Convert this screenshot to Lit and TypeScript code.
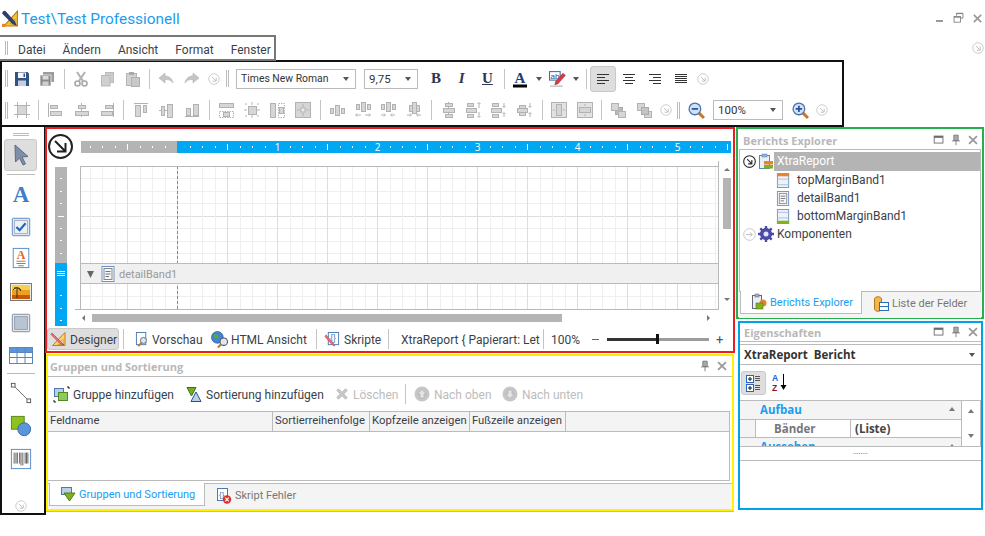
import { LitElement, html, svg, css } from 'lit';
import { customElement } from 'lit/decorators.js';

const G = '#d6d6d6', S = '#b2b2b2';
const r = (x: number, y: number, w: number, h: number, dash = false) =>
  svg`<rect x=${x + .5} y=${y + .5} width=${w} height=${h} fill=${dash ? 'none' : G} stroke=${S} stroke-dasharray=${dash ? '1.5 1' : 'none'}/>`;
const l = (x1: number, y1: number, x2: number, y2: number) =>
  svg`<line x1=${x1} y1=${y1} x2=${x2} y2=${y2} stroke=${S}/>`;
const ar = (d: string) => svg`<path d=${d} fill="none" stroke=${S}/>`;

const I: Record<string, any> = {
  save: svg`<path d="M1 1h12.5L15 2.5V15H1z" fill="#34527f"/><rect x="4" y="1.5" width="8" height="5.5" fill="#f4f6f9"/><rect x="4" y="9.5" width="8" height="5.5" fill="#c3cfe0"/><rect x="9.5" y="2.5" width="1.5" height="3.5" fill="#34527f"/>`,
  saveall: svg`<path d="M4 1h11v10H4z" fill="#9d9d9d"/><path d="M1 4h11v11H1z" fill="#8c8c8c" stroke="#fff" stroke-width=".7"/><rect x="3.5" y="5" width="6" height="3.5" fill="#dcdcdc"/><rect x="3.5" y="10.5" width="6" height="4" fill="#cfcfcf"/>`,
  cut: svg`<path d="M4 1l6 9M12 1L6 10" stroke="#b4b4b4" stroke-width="2.2" fill="none"/><circle cx="4.5" cy="12.5" r="2.5" fill="#fff" stroke="#a8a8a8" stroke-width="1.6"/><circle cx="11.5" cy="12.5" r="2.5" fill="#fff" stroke="#a8a8a8" stroke-width="1.6"/>`,
  copy: svg`<rect x="6.5" y="1.5" width="8" height="10" fill="#ccc" stroke="#bbb"/><rect x="2.5" y="4.5" width="8.5" height="10.5" fill="#cfcfcf" stroke="#bbb"/>`,
  paste: svg`<rect x="1.5" y="2.5" width="10" height="12" fill="#d2d2d2" stroke="#b5b5b5"/><rect x="4" y="1" width="5" height="3" fill="#aaa"/><rect x="6.5" y="6.5" width="8" height="9" fill="#c9c9c9" stroke="#b0b0b0"/>`,
  undo: svg`<path d="M1 7l6-5v3c4 0 7 2 8 7-2-3-4-3.500-8-3.500V12z" fill="#c4c4c4" stroke="#b5b5b5" stroke-width=".6"/>`,
  redo: svg`<path d="M15 7L9 2v3C5 5 2 7 1 12c2-3 4-3.500 8-3.500V12z" fill="#c4c4c4" stroke="#b5b5b5" stroke-width=".6"/>`,
  circ: svg`<circle cx="8" cy="8" r="6" fill="#fff" stroke="#c6c6c6"/><path d="M5.500 5.500L10 10M10.500 6.500v4h-4" stroke="#b8b8b8" fill="none"/>`,
  hlight: svg`<rect x=".5" y="1.500" width="10" height="8" fill="#fff" stroke="#3b6fb5"/><text x="1.500" y="8" font-size="7.500" fill="#1f4e96" style="font-family:'Liberation Sans'">ab</text><path d="M6 11l7-8 2.500 2-7 8-3 1z" fill="#d83a3a" stroke="#a02020" stroke-width=".4"/><rect x="1" y="14.500" width="12" height="1.500" fill="#c9c9c9"/>`,
  al: svg`<path d="M2 3.500h12M2 6.500h8M2 9.500h12M2 12.500h8" stroke="#333" fill="none"/>`,
  ac: svg`<path d="M2 3.500h12M4 6.500h8M2 9.500h12M4 12.500h8" stroke="#333" fill="none"/>`,
  ar: svg`<path d="M2 3.500h12M6 6.500h8M2 9.500h12M6 12.500h8" stroke="#333" fill="none"/>`,
  aj: svg`<path d="M2 3.500h12M2 5.500h12M2 7.500h12M2 9.500h12M2 11.500h12" stroke="#333" fill="none"/>`,
  grid: svg`${r(3, 3, 9, 9)}${l(0, 3.5, 16, 3.5)}${l(0, 12.5, 16, 12.5)}${l(3.5, 0, 3.5, 16)}${l(12.5, 0, 12.5, 16)}`,
  s1: svg`${l(1.5, 1, 1.5, 15)}${r(3, 3, 7, 3)}${r(3, 9, 11, 4)}`,
  s2: svg`${l(8.5, 1, 8.5, 15)}${r(5, 3, 7, 3)}${r(2, 9, 13, 4)}`,
  s3: svg`${l(14.5, 1, 14.5, 15)}${r(6, 3, 7, 3)}${r(2, 9, 11, 4)}`,
  s4: svg`${l(1, 1.5, 15, 1.5)}${r(2, 3, 5, 11)}${r(10, 3, 3, 7)}`,
  s5: svg`${l(1, 8.5, 15, 8.5)}${r(3, 4, 3, 9)}${r(9, 2, 5, 13)}`,
  s6: svg`${l(1, 14.5, 15, 14.5)}${r(2, 6, 4, 7)}${r(9, 2, 5, 11)}`,
  w1: svg`${r(1, 1, 14, 4)}${r(1, 9, 14, 6, true)}${r(5, 10, 6, 4)}`,
  w2: svg`${r(4, 4, 8, 8)}${l(8, 0, 8, 3)}${l(8, 13, 8, 16)}${l(0, 8, 3, 8)}${l(13, 8, 16, 8)}${ar('M1 2h2M13 2h2M1 14h2M13 14h2')}`,
  w3: svg`${r(1, 1, 5, 14)}${r(9, 1, 6, 14, true)}${r(10, 5, 4, 6)}`,
  w4: svg`<rect x=".5" y=".5" width="15" height="15" fill=${G} stroke=${S}/><rect x="6" y="6" width="4" height="4" fill="#eee" stroke=${S}/>${ar('M8 2v3M8 11v3M2 8h3M11 8h3')}`,
  h1: svg`${r(1, 6, 3, 5)}${r(6, 3, 4, 10)}${r(12, 6, 3, 5)}`,
  h2: svg`${r(1, 2, 3, 5)}${r(6, 0, 4, 9)}${r(12, 2, 3, 5)}${ar('M1 13h5M10 13h5M2 11.500l-1.500 1.500 1.500 1.500M14 11.500l1.500 1.500-1.500 1.500')}`,
  h3: svg`${r(1, 2, 3, 5)}${r(6, 0, 4, 9)}${r(12, 2, 3, 5)}${ar('M1 13h4M11 13h4M4 11.500l1.500 1.500-1.500 1.500M12 11.500l-1.500 1.500 1.500 1.500')}`,
  h4: svg`${r(3, 3, 3, 6)}${r(6, 0, 4, 11)}${r(10, 3, 3, 6)}${ar('M1 13h4M11 13h4M4 11.500l1.500 1.500-1.500 1.500M12 11.500l-1.500 1.500 1.500 1.500')}`,
  v1: svg`${l(8.5, 0, 8.5, 16)}${r(5, 1, 7, 3)}${r(3, 6, 11, 4)}${r(5, 12, 7, 3)}`,
  v2: svg`${r(1, 1, 6, 3)}${r(0, 6, 10, 4)}${r(1, 12, 6, 3)}${ar('M13 1v5M13 10v5M11.500 2l1.500-1.500 1.500 1.500M11.500 14l1.500 1.500 1.500-1.500')}`,
  v3: svg`${r(1, 1, 6, 3)}${r(0, 6, 10, 4)}${r(1, 12, 6, 3)}${ar('M13 1v4M13 11v4M11.500 4l1.500 1.500 1.500-1.500M11.500 12l1.500-1.500 1.500 1.500')}`,
  v4: svg`${r(2, 3, 6, 3)}${r(0, 6, 10, 4)}${r(2, 10, 6, 3)}${ar('M13 1v4M13 11v4M11.500 4l1.500 1.500 1.500-1.500M11.500 12l1.500-1.500 1.500 1.500')}`,
  c1: svg`<rect x=".5" y=".5" width="15" height="15" fill="#e2e2e2" stroke=${S}/><rect x="5.500" y="2.500" width="5" height="11" fill=${G} stroke=${S}/>${ar('M2 8h2M12 8h2')}`,
  c2: svg`<rect x=".5" y=".5" width="15" height="15" fill="#e2e2e2" stroke=${S}/><rect x="2.500" y="5.500" width="11" height="5" fill=${G} stroke=${S}/>${ar('M8 2v2M8 12v2')}`,
  front: svg`<rect x="5.500" y="5.500" width="7" height="7" fill="#bbb" stroke="#aaa"/><rect x="1.500" y="1.500" width="7" height="7" fill=${G} stroke=${S}/><rect x="8.500" y="9.500" width="7" height="6" fill=${G} stroke=${S}/>`,
  back: svg`<rect x="1.500" y="1.500" width="7" height="7" fill=${G} stroke=${S}/><rect x="8.500" y="9.500" width="7" height="6" fill=${G} stroke=${S}/><rect x="5.500" y="5.500" width="7" height="7" fill="#c4c4c4" stroke="#aaa"/>`,
  zoomout: svg`<path d="M10 10l5 5" stroke="#c8772a" stroke-width="2.800"/><circle cx="6.500" cy="6.500" r="5.500" fill="#cfe2f7" stroke="#4b73b0" stroke-width="1.200"/><path d="M3.500 6.500h6" stroke="#27509a" stroke-width="1.600"/>`,
  zoomin: svg`<path d="M10 10l5 5" stroke="#c8772a" stroke-width="2.800"/><circle cx="6.500" cy="6.500" r="5.500" fill="#cfe2f7" stroke="#4b73b0" stroke-width="1.200"/><path d="M3.500 6.500h6M6.500 3.500v6" stroke="#27509a" stroke-width="1.600"/>`,
  logo: svg`<path d="M2 15L14.500 1v14z" fill="#f3c23a" stroke="#b9791a"/><path d="M8 13l4-4.500V13z" fill="#fff" stroke="#b9791a" stroke-width=".7"/><path d="M1 1.500L3 1l9 10 1.500 3.500-3.500-1.500L.5 3.500z" fill="#2b3f73" stroke="#1c2a50" stroke-width=".5"/><rect x="0" y="13" width="3" height="3" fill="#e8832e"/>`,
  designer: svg`<path d="M1.500 14.500L14 1.500v13z" fill="#f7d36c" stroke="#c97b1c"/><path d="M7 13.500L12 8.500v5z" fill="#fff" stroke="#c97b1c" stroke-width=".7"/><path d="M1 2l9 9 3 3-4-1.500-9-9z" fill="#e9737a" stroke="#a33" stroke-width=".6"/>`,
  preview: svg`<rect x="1.500" y=".5" width="10" height="13" fill="#fff" stroke="#4d78b4"/><circle cx="9" cy="9" r="3.200" fill="#dce8f6" stroke="#666"/><path d="M7 11.500l-3.500 3.500" stroke="#b37a3a" stroke-width="2"/>`,
  htmlv: svg`<circle cx="6" cy="6" r="5.500" fill="#3f86d6" stroke="#28579a" stroke-width=".7"/><path d="M3 3c2-1 3 1 4 2s-1 3-3 2S1.500 4 3 3z" fill="#5aa83c"/><circle cx="12" cy="10" r="3.500" fill="#dce8f6" stroke="#555"/><path d="M9.500 12.500L6.500 15.500" stroke="#b37a3a" stroke-width="2"/>`,
  script: svg`<rect x="3.500" y=".5" width="11" height="13" fill="#fff" stroke="#4d78b4"/><text x="5.500" y="10" font-size="9" fill="#3b6fb5" style="font-family:'Liberation Sans'">{}</text><path d="M1 3l8 9 1.500 3-3-1.500L0 5z" fill="#e9737a" stroke="#a33" stroke-width=".5"/>`,
  band: svg`<rect x="1.500" y=".5" width="12" height="15" fill="#fff" stroke="#6f94c4"/><rect x="3.500" y="2.500" width="8" height="11" fill="#f2f5f9" stroke="#888"/><path d="M5 5.500h5M5 8h5M5 10.500h3.500" stroke="#777"/>`,
  topband: svg`<rect x="1.500" y=".5" width="12" height="15" fill="#eef3fa" stroke="#6f94c4"/><rect x="1" y="0" width="13" height="3.500" fill="#e8832e"/><path d="M1.500 6.500h12M1.500 12.500h12" stroke="#a9c0dd"/>`,
  botband: svg`<rect x="1.500" y=".5" width="12" height="15" fill="#eef3fa" stroke="#6f94c4"/><rect x="1" y="12.500" width="13" height="3.500" fill="#7fb21f"/><path d="M1.500 3.500h12M1.500 9.500h12" stroke="#a9c0dd"/>`,
  report: svg`<rect x="1.500" y="1.500" width="10" height="13" fill="#e9f0f8" stroke="#5b86bd"/><rect x="4" y="0" width="5" height="3" fill="#8fb0d8" stroke="#5b86bd" stroke-width=".5"/><rect x="6" y="7" width="9" height="3.500" fill="#e8832e"/><rect x="6" y="11" width="9" height="3.500" fill="#7fb21f"/>`,
  gear: svg`<circle cx="8" cy="8" r="5.500" fill="#5656b8" stroke="#33337f"/><path d="M8 0v16M0 8h16M2.300 2.300l11.400 11.400M13.700 2.300L2.300 13.700" stroke="#4a4aa8" stroke-width="2.400"/><circle cx="8" cy="8" r="2.500" fill="#e6e6f5"/>`,
  dark: svg`<circle cx="8" cy="8" r="6.200" fill="#fff" stroke="#2c2c2c" stroke-width="1.200"/><path d="M5.500 5.500L10 10M10.500 6.500v4h-4" stroke="#2c2c2c" fill="none" stroke-width="1.200"/>`,
  right: svg`<circle cx="8" cy="8" r="6.200" fill="#fff" stroke="#c4c4c4"/><path d="M4.500 8h6.500M8.500 5.500L11 8l-2.500 2.500" stroke="#bbb" fill="none"/>`,
  texp: svg`<rect x="1.500" y="1.500" width="9" height="13" fill="#e9f0f8" stroke="#667"/><rect x="4" y="0" width="4" height="3" fill="#aab" stroke="#667" stroke-width=".5"/><circle cx="12" cy="9" r="3.500" fill="#e8832e"/><rect x="5" y="9" width="7" height="6" fill="#7fb21f" stroke="#567a14" stroke-width=".6"/>`,
  tfield: svg`<path d="M1.500 3c0-3 7-3 7 0v10c0 3-7 3-7 0z" fill="#f2b64a" stroke="#b8791b"/><rect x="6.500" y="6.500" width="9" height="4" fill="#fff" stroke="#2f6fb5"/><rect x="6.500" y="10.500" width="9" height="4" fill="#fff" stroke="#2f6fb5"/>`,
  tgroup: svg`<rect x="1.500" y="1.500" width="10" height="7" fill="#b9d0ea" stroke="#4d78b4"/><path d="M4 7h11l-5.500 8z" fill="#7fb21f" stroke="#567a14"/>`,
  terr: svg`<rect x="1.500" y=".5" width="10" height="12" fill="#fff" stroke="#4d78b4"/><text x="3" y="9" font-size="8" fill="#3b6fb5" style="font-family:'Liberation Sans'">{}</text><circle cx="11" cy="11.500" r="4.200" fill="#d8342c"/><path d="M9.200 9.700l3.600 3.600M12.800 9.700l-3.600 3.600" stroke="#fff" stroke-width="1.200"/>`,
  gadd: svg`<path d="M1 16v-2M1 16h2M16 1h-2M16 1v2" stroke="#111" fill="none"/><rect x="1.500" y="2.500" width="9" height="8" fill="#b9d0ea" stroke="#4d78b4"/><rect x="5.500" y="6.500" width="9" height="8" fill="#8ecb5a" stroke="#4f8a22"/>`,
  sadd: svg`<path d="M1 1.500h9L5.500 10z" fill="#6fae2a" stroke="#3f7312"/><path d="M5 15.500L10 6l5 9.500z" fill="#bcd2ec" stroke="#2f4f88"/>`,
  del: svg`<path d="M2 4l2-2 4 4 4-4 2 2-4 4 4 4-2 2-4-4-4 4-2-2 4-4z" fill="#c6c6c6" stroke="#bbb"/>`,
  up: svg`<circle cx="8" cy="8" r="7.500" fill="#c6c6c6"/><path d="M8 3.500L12.500 8H10v4H6V8H3.500z" fill="#e4e4e4" stroke="#aaa" stroke-width=".6"/>`,
  down: svg`<circle cx="8" cy="8" r="7.500" fill="#c6c6c6"/><path d="M8 12.500L3.500 8H6V4h4v4h2.500z" fill="#e4e4e4" stroke="#aaa" stroke-width=".6"/>`,
  maxim: svg`<rect x="2.500" y="3.500" width="10" height="8" fill="none" stroke="#666"/><path d="M2.500 4.500h10" stroke="#666" stroke-width="2"/>`,
  restore: svg`<path d="M5.500 4.500v-3h8v6h-3" fill="none" stroke="#777"/><path d="M5.500 2h8" stroke="#777"/><rect x="2.500" y="5.500" width="8" height="7" fill="#fff" stroke="#777"/><path d="M2.500 6.500h8" stroke="#777"/>`,
  pin: svg`<path d="M5.500 2.500h5v6h-5z" fill="#aaa" stroke="#777"/><path d="M3.500 9h9M8 9v5" stroke="#777"/>`,
  close: svg`<path d="M3.500 3.500l9 9M12.500 3.500l-9 9" stroke="#999" stroke-width="2"/>`,
  cat: svg`<rect x="1.500" y="1.500" width="7" height="7" fill="#fff" stroke="#2266cc"/><path d="M3 5h4M5 3v4" stroke="#111"/><path d="M10 2.500h5M10 4.500h5M10 6.500h5" stroke="#555"/><rect x="1.500" y="10.500" width="7" height="7" fill="#fff" stroke="#2266cc"/><path d="M3 14h4M5 12v4" stroke="#111"/><path d="M10 11.500h5M10 13.500h5M10 15.500h5" stroke="#555"/>`,
  az: svg`<text x="0" y="7" font-size="8.500" font-weight="700" fill="#1a62d6" style="font-family:'Liberation Sans'">A</text><text x="0" y="17" font-size="8.500" font-weight="700" fill="#8c1414" style="font-family:'Liberation Sans'">Z</text><path d="M11.500 0v13" stroke="#000"/><path d="M8.500 11h6l-3 5z" fill="#000"/>`,
  pointer: svg`<path d="M6 2l.5 17 4-4 3.500 7 2.500-1.200L13 14l6-.5z" fill="#7f8fa8" stroke="#5f6c80"/>`,
  bigA: svg`<text x="12" y="20" text-anchor="middle" font-size="25" font-weight="700" fill="#3f7fc9" style="font-family:'Liberation Serif'">A</text>`,
  check: svg`<rect x="2.500" y="2.500" width="19" height="19" rx="1" fill="#dfe8f3" stroke="#4f86c6"/><rect x="5" y="5" width="14" height="14" fill="#eef1f5" stroke="#aab"/><path d="M7 12l3.500 3.500L17 8" stroke="#1f66c4" stroke-width="2.400" fill="none"/>`,
  tbox: svg`<rect x="3.500" y="1.500" width="17" height="21" fill="#fff" stroke="#4f86c6"/><text x="12" y="13" text-anchor="middle" font-size="13" font-weight="700" fill="#d9681d" style="font-family:'Liberation Serif'">A</text><path d="M7 15.500h10M7 18h10M9 20.500h6" stroke="#777"/>`,
  pic: svg`<rect x="1.500" y="3.500" width="21" height="17" fill="#eee" stroke="#777"/><rect x="3" y="5" width="18" height="14" fill="#f0a021"/><rect x="3" y="5" width="18" height="5" fill="#f6d04a"/><rect x="3" y="15" width="18" height="4" fill="#c8580e"/><path d="M8 18V9M4 10c2-3 6-3 8 0M5 8c2 0 5 0 7 3" stroke="#3a2a10" fill="none"/>`,
  square: svg`<rect x="2.500" y="2.500" width="19" height="19" rx="1" fill="#e4e8ee" stroke="#7b8694"/><rect x="5" y="5" width="14" height="14" fill="#b9c4d3" stroke="#93a0b2"/>`,
  table: svg`<rect x=".5" y="3.500" width="23" height="16" fill="#fff" stroke="#5b86bd"/><rect x=".5" y="3.500" width="23" height="5" fill="#5b96d8" stroke="#5b86bd"/><path d="M.5 13.500h23M8 3.500v16M16 3.500v16" stroke="#5b86bd"/>`,
  line: svg`<path d="M3.500 3.500l17 17" stroke="#666"/><rect x="1.500" y="1.500" width="4" height="4" fill="#fff" stroke="#555"/><rect x="18.500" y="18.500" width="4" height="4" fill="#fff" stroke="#555"/>`,
  shapes: svg`<rect x="1.500" y="1.500" width="14" height="14" fill="#8dc21f" stroke="#5a8312"/><circle cx="15.500" cy="15.500" r="7" fill="#5b96d8" stroke="#2f64a8"/>`,
  barcode: svg`<rect x="1.500" y="1.500" width="21" height="21" fill="#fff" stroke="#4f86c6"/><path d="M4.500 5v12M6.500 5v12M8 5v12M10.500 5v12M12 5v14M14 5v14M16.500 5v12M18 5v12M19.500 5v12" stroke="#555"/>`,
};

const ico = (n: string, size = 16, vb = 16) =>
  html`<svg class="ico" width=${size} height=${size} viewBox="0 0 ${vb} ${vb}">${I[n]}</svg>`;

@customElement('app-root')
export class AppRoot extends LitElement {
  static styles = css`
    :host { display: block; width: 985px; height: 536px; overflow: hidden; background: #fff; font-family: Roboto, "Liberation Sans", sans-serif; font-size: 12px; color: #3a3f4a; }
    * { box-sizing: border-box; }
    .ico { display: block; flex: none; overflow: visible; }
    .title { height: 35px; display: flex; align-items: center; padding: 2px 0 0 2px; }
    .title-text { font-size: 15.4px; color: #1a9cf0; margin-left: 2px; }
    .win { margin-left: auto; display: flex; gap: 6.5px; padding-right: 1px; align-items: center; }
    .min { width: 7px; height: 2px; background: #999; margin-top: 5px; margin-right: 2.5px; }
    .menu-row { height: 25px; position: relative; z-index: 2; display: flex; justify-content: space-between; }
    .menu { width: 276px; height: 26px; border: 2px solid #777; border-left: none; display: flex; align-items: center; gap: 17px; padding: 0 0 0 5px; background: #fff; }
    .menu span { padding-top: 3px; }
    .menu .grip { margin-right: -7px; height: 14px; }
    .grip { width: 3px; height: 17px; border-left: 1px solid #bbb; border-right: 1px solid #bbb; flex: none; }
    .corner { margin: 6px 0 0 0; }
    .toolbar { width: 844px; height: 67px; border: 2px solid #111; padding: 0 0 0 3px; display: flex; flex-direction: column; }
    .tbrow { display: flex; align-items: center; }
    .tbrow.one { height: 32px; padding-top: 1px; }
    .tbrow.two { height: 31px; padding-top: 1px; }
    .b { width: 25.75px; height: 24px; display: flex; align-items: center; justify-content: center; flex: none; }
    .b.lead { margin-left: .8px; }
    .sep { width: 8px; height: 20px; flex: none; display: flex; justify-content: center; }
    .sep::before { content: ""; width: 1px; background: #c4c4c4; }
    .fmt { font-family: "Liberation Serif", serif; font-size: 15px; font-weight: 700; color: #2b3654; }
    .fmt.i { font-style: italic; }
    .fmt.u { text-decoration: underline; }
    .a { width: 24px; } .dd { width: 13px; } .hl { width: 24px; }
    .alb { width: 26px; height: 26px; }
    .on { background: #dedede; border: 1px solid #c9c9c9; border-radius: 3px; }
    .small { width: 18px; height: 24px; display: flex; align-items: center; justify-content: center; flex: none; }
    .tri { width: 0; height: 0; border: 3.5px solid transparent; border-top: 4px solid #555; border-bottom: none; flex: none; }
    .combo { height: 20px; border: 1px solid #bbb; display: flex; align-items: center; justify-content: space-between; padding: 0 6px 0 4px; font-size: 11.5px; color: #333; flex: none; }
    .c-font { width: 120px; margin-left: 7px; font-size: 10.4px; }
    .c-size { width: 54px; margin-left: 8px; margin-right: 5px; }
    .c-zoom { width: 70px; margin: 0 7px 0 6.4px; }
    .g-row1 { margin-left: 3px; }
    .g-row2 { margin-left: 2px; }
    .zoom-b { width: 20px; display: flex; justify-content: center; flex: none; margin-left: 6.6px; }
    .zin { width: 20px; display: flex; justify-content: center; flex: none; margin-right: 2.6px; }
    .body { display: flex; height: 409px; }
    .toolbox { width: 46px; height: 388px; border: 2px solid #111; border-top: none; display: flex; flex-direction: column; align-items: center; padding-right: 5px; padding-top: 6px; flex: none; }
    .tgrip { width: 16px; height: 3px; border-top: 1px solid #bbb; border-bottom: 1px solid #bbb; }
    .tactive { width: 33px; height: 32px; display: flex; align-items: center; justify-content: center; margin-top: 3px; }
    .tsep { width: 28px; height: 1px; background: #bbb; flex: none; }
    .tsep.s1 { margin-top: 3px; }
    .tsep.s2 { margin-top: 2px; }
    .tb { height: 31px; display: flex; align-items: center; justify-content: center; flex: none; }
    .first { margin-top: 4px; margin-bottom: 1px; }
    .m3 { margin-top: 3px; }
    .m2 { margin-top: 2px; }
    .tend { margin-top: auto; }
    .center { width: 690px; margin-left: -1px; flex: none; display: flex; flex-direction: column; position: relative; }
    .red { height: 226px; border: 2px solid #ed1c24; display: flex; flex-direction: column; }
    .designer { height: 198px; display: grid; grid-template-columns: 28px 645px 13px; grid-template-rows: 32px 149px 17px; }
    .hr { grid-column: 2 / 4; grid-row: 1; }
    .vr { grid-column: 1; grid-row: 2 / 4; }
    .cv { grid-column: 2; grid-row: 2; }
    .vs { grid-column: 3; grid-row: 2; }
    .hs { grid-column: 2 / 4; grid-row: 3; }
    .corner-c { grid-column: 1; grid-row: 1; padding: 4px 0 0 0; }
    svg text { font-family: "Open Sans", "Liberation Sans", sans-serif; }
    .bar { height: 22px; margin-top: 1px; display: flex; align-items: center; }
    .tab { display: flex; align-items: center; height: 22px; flex: none; white-space: nowrap; }
    .tab span, .t-inf, .t-pct { padding-top: 2px; }
    .vsep { width: 1px; height: 20px; background: #c4c4c4; flex: none; }
    .t-des { width: 72px; padding-left: 3px; gap: 3px; }
    .t-pre { width: 76px; margin-left: 11px; gap: 2px; }
    .t-htm { width: 105px; gap: 3px; }
    .t-skr { width: 63px; margin-left: 8px; gap: 4px; }
    .t-inf { width: 142px; margin-left: 12px; }
    .t-pct { width: 41px; margin-left: 7px; }
    .s1v { margin-left: 4px; }
    .minus { width: 7px; height: 1px; background: #666; margin-right: 8px; flex: none; }
    .slider { width: 102px; height: 3px; background: #9c9c9c; position: relative; flex: none; }
    .slider::before { content: ""; position: absolute; left: 0; top: 0; width: 50px; height: 3px; background: #333; }
    .slider::after { content: ""; position: absolute; left: 49px; top: -3.500px; width: 3px; height: 10px; background: #111; }
    .plus { margin-left: 7px; font-size: 13px; color: #555; line-height: 1; }
    .yellow { margin: 1px 1px 0 1px; height: 157px; border: 2px solid #fff200; display: flex; flex-direction: column; box-shadow: 0 1px 0 #bbb; }
    .phead { height: 21px; flex: none; display: flex; align-items: center; justify-content: space-between; padding: 0 3px 0 2px; border-bottom: 1px solid #bbb; font-family: "Open Sans", sans-serif; font-weight: 700; color: #b8b8b8; font-size: 11px; }
    .phead .acts { display: flex; gap: 3px; }
    .gt { height: 34px; flex: none; display: flex; align-items: center; padding: 0 0 0 5px; white-space: nowrap; }
    .gt .item { display: flex; align-items: center; gap: 4px; flex: none; }
    .gt .item span { padding-top: 1px; }
    .off { color: #bcbcbc; }
    .i1 { width: 133px; } .i2 { width: 149px; } .i3 { width: 70px; }
    .i4 { width: 88px; margin-left: 8px; } .i5 { width: 84px; }
    .ghead { height: 21px; flex: none; display: grid; grid-template-columns: 225px 97px 100px 96px 1fr; background: #f4f4f4; border: 1px solid #bbb; border-left: none; margin-right: 2px; font-size: 11.3px; }
    .ghead span { padding: 2px 0 0 2px; border-right: 1px solid #bbb; white-space: nowrap; overflow: hidden; }
    .ghead span:last-child { border-right: none; }
    .gbody { height: 49px; flex: none; border-right: 1px solid #bbb; border-bottom: 1px solid #bbb; margin-right: 2px; }
    .strip { margin-top: 2px; flex: 1; background: #f4f4f4; border-top: 1px solid #bbb; display: flex; align-items: flex-start; padding-left: 1px; }
    .stab { height: 23px; display: flex; align-items: center; gap: 3px; flex: none; white-space: nowrap; font-size: 11px; }
    .stab.active { background: #fff; border: 1px solid #bbb; border-top: none; margin-top: -1px; color: #1a9cf0; }
    .st1 { width: 156px; padding-left: 10px; }
    .st2 { padding-left: 11px; gap: 3px; color: #777; }
    .right { flex: none; width: 249px; margin-left: 1px; display: flex; flex-direction: column; position: relative; }
    .green { width: 248px; height: 192px; border: 2px solid #22b14c; padding: 0 1px; display: flex; flex-direction: column; }
    .green .phead, .blue .phead { padding: 0 1px 0 4px; }
    .green .phead { padding-top: 2px; }
    .tree { flex: 1; padding-top: 2px; display: flex; flex-direction: column; border-right: 1px solid #bbb; border-left: 1px solid #bbb; }
    .node { height: 18px; display: flex; align-items: center; flex: none; white-space: nowrap; }
    .n0 { padding-left: 2px; height: 19px; }
    .n0 .ico + .ico { margin-left: 1px; }
    .n0 .lbl { padding-left: 3px; background: #b4b4b4; color: #fff; flex: 1; height: 19px; line-height: 19px; }
    .n1 { padding-left: 36px; gap: 6px; }
    .n2 { padding-left: 2px; }
    .n2 .ico + .ico { margin-left: 1px; }
    .n2 span { margin-left: 3px; }
    .rstrip { height: 27px; flex: none; background: #f4f4f4; border-top: 1px solid #bbb; display: flex; align-items: flex-start; padding-left: 1px; margin-bottom: -1px; }
    .rs1 { width: 122px; padding-left: 10px; gap: 3px; }
    .rs2 { padding-left: 11px; gap: 3px; color: #777; }
    .blue { width: 245px; margin: 2px 0 0 2px; height: 189px; border: 2px solid #00a2e8; display: flex; flex-direction: column; }
    .blue .phead { height: 19px; }
    .pcombo { height: 21px; flex: none; margin-top: 2px; border: 1px solid #bbb; border-left: none; border-right: none; display: flex; align-items: center; justify-content: space-between; padding: 0 6px 0 4px; font-family: "Open Sans", sans-serif; font-size: 11.5px; font-weight: 700; color: #333; }
    .ptools { height: 35px; flex: none; display: flex; align-items: center; gap: 6px; padding-left: 1px; }
    .pon { width: 25px; height: 24px; display: flex; align-items: center; justify-content: center; }
    .pgrid { height: 47px; flex: none; border: 1px solid #bbb; border-left: none; display: flex; overflow: hidden; font-family: "Open Sans", sans-serif; font-size: 11.5px; }
    .pmain { flex: 1; display: flex; flex-direction: column; overflow: hidden; border-right: 1px solid #bbb; }
    .pcat { height: 18px; flex: none; background: #f4f4f4; display: flex; align-items: center; justify-content: space-between; padding: 0 6px 2px 20px; color: #1a9cf0; font-weight: 700; }
    .pup { width: 0; height: 0; border: 3.500px solid transparent; border-bottom: 4px solid #777; border-top: none; }
    .prow { height: 19px; flex: none; display: grid; grid-template-columns: 15px 95px 1fr; border-top: 1px solid #bbb; border-bottom: 1px solid #bbb; font-weight: 700; }
    .prow .pl { background: #f4f4f4; }
    .prow .pn { border-left: 1px solid #bbb; padding-left: 18px; color: #777; line-height: 17px; }
    .prow .pv { border-left: 1px solid #bbb; padding-left: 4px; color: #444; line-height: 17px; }
    .pscroll { width: 18px; flex: none; display: flex; flex-direction: column; align-items: center; justify-content: space-between; padding: 8px 0; }
    .pdown { width: 0; height: 0; border: 3.500px solid transparent; border-top: 4px solid #777; border-bottom: none; }
    .psplit { height: 13px; flex: none; display: flex; align-items: center; justify-content: center; color: #333; font-size: 7px; line-height: 1; padding-bottom: 3px; }
    .pdesc { flex: 1; border-top: 1px solid #bbb; }
  `;

  private tb(names: string[]) {
    return names.map(n => n === '|' ? html`<div class="sep"></div>` : html`<div class="b">${ico(n)}</div>`);
  }

  private hRuler() {
    const k = Array.from({ length: 53 }, (_, i) => i + 1);
    return svg`<svg class="ico" width="658" height="32" viewBox="0 0 658 32">
      <rect x="6" y="12" width="96" height="12" fill="#b4b4b4"/><rect x="102" y="12" width="554" height="12" fill="#00a8f3"/>
      ${k.map(i => {
        const x = Math.floor(2.5 + 12.5 * i) + .5, rel = i - 8;
        if (x > 656 || rel === 0) return null;
        if (rel > 0 && rel % 8 === 0) return svg`<text x=${x} y="21.500" text-anchor="middle" font-size="10" fill="#fff">${rel / 8}</text>`;
        return rel % 4 === 0 ? svg`<rect x=${x - .5} y="15" width="1" height="6" fill="#fff"/>` : svg`<rect x=${x - .5} y="17" width="1" height="2" fill="#fff"/>`;
      })}
    </svg>`;
  }

  private vRuler() {
    const t = [17, 30, 42, 67, 79, 92, 134, 147, 159];
    return svg`<svg class="ico" width="28" height="166" viewBox="0 0 28 166">
      <rect x="8" y="6" width="12" height="96" fill="#b4b4b4"/><rect x="8" y="102" width="12" height="63" fill="#00a8f3"/>
      ${t.map(y => svg`<rect x="13" y=${y} width="2" height="1" fill="#fff"/>`)}
      <rect x="11" y="55" width="6" height="1" fill="#fff"/>
      ${[110, 112, 114].map(y => svg`<rect x="10" y=${y} width="8" height="1" fill="#fff"/>`)}
    </svg>`;
  }

  private canvas() {
    const xs = Array.from({ length: 51 }, (_, i) => i + 1);
    const H1 = [0, 1, 2, 3, 4, 5, 6, 7].map(j => Math.floor(5 + 12.5 * j) + .5);
    const H2 = [1, 2].map(j => 123 + 12.5 * j);
    return svg`<svg class="ico" width="645" height="149" viewBox="0 0 645 149">
      ${H1.map((y, j) => svg`<line x1="5" x2="643" y1=${y} y2=${y} stroke=${j % 4 === 0 ? '#dedede' : '#efefef'}/>`)}
      ${H2.map(y => svg`<line x1="5" x2="643" y1=${Math.floor(y) + .5} y2=${Math.floor(y) + .5} stroke="#efefef"/>`)}
      ${xs.map(i => {
        const x = Math.floor(2.5 + 12.5 * i) + .5;
        if (x > 643) return null;
        return svg`<line x1=${x} x2=${x} y1="5" y2="148" stroke=${i % 4 === 0 ? '#dedede' : '#efefef'}/>`;
      })}
      <line x1="102.500" x2="102.500" y1="5" y2="148" stroke="#8a8a8a" stroke-dasharray="3 2"/>
      <rect x="5.500" y="102.500" width="638" height="20" fill="#f0f0f0" stroke="#bbb"/>
      <path d="M12 110h7l-3.500 7z" fill="#666"/>
      <g transform="translate(25.500 105)">${I.band}</g>
      <text x="44" y="116.500" font-size="11" font-weight="400" fill="#999" style="font-family:Roboto">detailBand1</text>
      <path d="M5.500 5.500V148M5.500 5.500H643.500M643.500 0V148.500M0 148.500H643.500" fill="none" stroke="#b8b8b8"/>
    </svg>`;
  }

  private vScroll() {
    return svg`<svg class="ico" width="13" height="149" viewBox="0 0 13 149">
      <path d="M4 10l3-3 3 3z" fill="#777"/><rect x="3" y="17" width="8" height="51" fill="#b4b4b4"/><path d="M4 137l3 3 3-3z" fill="#777"/>
    </svg>`;
  }

  private hScroll() {
    return svg`<svg class="ico" width="658" height="17" viewBox="0 0 658 17">
      <path d="M10 5v6l-3-3z" fill="#777"/><rect x="17" y="4" width="470" height="8" fill="#b4b4b4"/><path d="M632 5v6l3-3z" fill="#777"/>
    </svg>`;
  }

  private phead(t: string, max = false) {
    return html`<div class="phead"><span>${t}</span><div class="acts">${max ? ico('maxim', 14) : null}${ico('pin', 14)}${ico('close', 14)}</div></div>`;
  }

  render() {
    return html`
      <div class="title">
        ${ico('logo', 17)}
        <span class="title-text">Test\\Test Professionell</span>
        <div class="win"><div class="min"></div>${ico('restore', 13)}${ico('close', 13)}</div>
      </div>
      <div class="menu-row">
        <div class="menu"><div class="grip"></div><span>Datei</span><span>Ändern</span><span>Ansicht</span><span>Format</span><span>Fenster</span></div>
        <div class="corner">${ico('circ', 14)}</div>
      </div>
      <div class="toolbar">
        <div class="tbrow one">
          <div class="grip"></div><div class="b lead">${ico('save')}</div>
          ${this.tb(['saveall', '|', 'cut', 'copy', 'paste', '|', 'undo', 'redo'])}
          <div class="small">${ico('circ', 14)}</div>
          <div class="grip g-row1"></div>
          <div class="combo c-font"><span>Times New Roman</span><div class="tri"></div></div>
          <div class="combo c-size"><span>9,75</span><div class="tri"></div></div>
          <div class="b fmt">B</div><div class="b fmt i">I</div><div class="b fmt u">U</div>
          <div class="sep"></div>
          <div class="b a"><svg class="ico" width="16" height="18" viewBox="0 0 16 18"><text x="8" y="13" text-anchor="middle" font-size="15" font-weight="700" fill="#1c3f7c" style="font-family:'Liberation Serif'">A</text><rect x="1" y="14.500" width="14" height="3" fill="#000"/></svg></div>
          <div class="b dd"><div class="tri"></div></div>
          <div class="b hl">${ico('hlight', 17)}</div>
          <div class="b dd"><div class="tri"></div></div>
          <div class="sep"></div>
          <div class="b alb on">${ico('al')}</div><div class="b alb">${ico('ac')}</div><div class="b alb">${ico('ar')}</div><div class="b alb">${ico('aj')}</div>
          <div class="small">${ico('circ', 14)}</div>
        </div>
        <div class="tbrow two">
          <div class="grip"></div><div class="b lead">${ico('grid')}</div>
          ${this.tb(['|', 's1', 's2', 's3', '|', 's4', 's5', 's6', '|', 'w1', 'w2', 'w3', 'w4', '|', 'h1', 'h2', 'h3', 'h4', '|', 'v1', 'v2', 'v3', 'v4', '|', 'c1', 'c2', '|', 'front', 'back'])}
          <div class="small">${ico('circ', 14)}</div>
          <div class="grip g-row2"></div>
          <div class="zoom-b">${ico('zoomout', 17)}</div>
          <div class="combo c-zoom"><span>100%</span><div class="tri"></div></div>
          <div class="zin">${ico('zoomin', 17)}</div>
          <div class="small">${ico('circ', 14)}</div>
        </div>
      </div>
      <div class="body">
        <div class="toolbox">
          <div class="tgrip"></div>
          <div class="tactive on">${ico('pointer', 24, 24)}</div>
          <div class="tsep s1"></div>
          <div class="tb first">${ico('bigA', 22, 24)}</div>
          <div class="tb">${ico('check', 22, 24)}</div>
          <div class="tb">${ico('tbox', 22, 24)}</div>
          <div class="tb m3">${ico('pic', 24, 24)}</div>
          <div class="tb">${ico('square', 22, 24)}</div>
          <div class="tb m2">${ico('table', 24, 24)}</div>
          <div class="tsep s2"></div>
          <div class="tb m3">${ico('line', 22, 24)}</div>
          <div class="tb m2">${ico('shapes', 22, 24)}</div>
          <div class="tb m2">${ico('barcode', 22, 24)}</div>
          <div class="tend">${ico('circ', 14)}</div>
        </div>
        <div class="center">
          <div class="red">
            <div class="designer">
              <div class="corner-c"><svg class="ico" width="26" height="26" viewBox="0 0 26 26"><circle cx="13.500" cy="13.500" r="11.500" fill="#fff" stroke="#222" stroke-width="2"/><path d="M8 8l10 10M18.500 10v8.500H10" fill="none" stroke="#222" stroke-width="2"/></svg></div>
              <div class="hr">${this.hRuler()}</div>
              <div class="vr">${this.vRuler()}</div>
              <div class="cv">${this.canvas()}</div>
              <div class="vs">${this.vScroll()}</div>
              <div class="hs">${this.hScroll()}</div>
            </div>
            <div class="bar">
              <div class="tab on t-des">${ico('designer')}<span>Designer</span></div>
              <div class="vsep s1v"></div>
              <div class="tab t-pre">${ico('preview', 15)}<span>Vorschau</span></div>
              <div class="tab t-htm">${ico('htmlv', 17)}<span>HTML Ansicht</span></div>
              <div class="vsep"></div>
              <div class="tab t-skr">${ico('script', 15)}<span>Skripte</span></div>
              <div class="vsep"></div>
              <div class="tab t-inf">XtraReport { Papierart: Let</div>
              <div class="vsep"></div>
              <div class="tab t-pct">100%</div>
              <div class="minus"></div>
              <div class="slider"></div>
              <div class="plus">+</div>
            </div>
          </div>
          <div class="yellow">
            ${this.phead('Gruppen und Sortierung')}
            <div class="gt">
              <div class="item i1">${ico('gadd')}<span>Gruppe hinzufügen</span></div>
              <div class="item i2">${ico('sadd')}<span>Sortierung hinzufügen</span></div>
              <div class="item i3 off">${ico('del', 14)}<span>Löschen</span></div>
              <div class="vsep"></div>
              <div class="item i4 off">${ico('up')}<span>Nach oben</span></div>
              <div class="item i5 off">${ico('down')}<span>Nach unten</span></div>
            </div>
            <div class="ghead"><span>Feldname</span><span>Sortierreihenfolge</span><span>Kopfzeile anzeigen</span><span>Fußzeile anzeigen</span><span></span></div>
            <div class="gbody"></div>
            <div class="strip">
              <div class="stab active st1">${ico('tgroup')}<span>Gruppen und Sortierung</span></div>
              <div class="stab st2">${ico('terr')}<span>Skript Fehler</span></div>
            </div>
          </div>
        </div>
        <div class="right">
          <div class="green">
            ${this.phead('Berichts Explorer', true)}
            <div class="tree">
              <div class="node n0">${ico('dark', 15)}${ico('report', 16)}<span class="lbl">XtraReport</span></div>
              <div class="node n1">${ico('topband', 15)}<span>topMarginBand1</span></div>
              <div class="node n1">${ico('band', 15)}<span>detailBand1</span></div>
              <div class="node n1">${ico('botband', 15)}<span>bottomMarginBand1</span></div>
              <div class="node n2">${ico('right', 15)}${ico('gear', 16)}<span>Komponenten</span></div>
            </div>
            <div class="rstrip">
              <div class="stab active rs1">${ico('texp')}<span>Berichts Explorer</span></div>
              <div class="stab rs2">${ico('tfield')}<span>Liste der Felder</span></div>
            </div>
          </div>
          <div class="blue">
            ${this.phead('Eigenschaften', true)}
            <div class="pcombo"><span>XtraReport&nbsp;&nbsp;Bericht</span><div class="tri"></div></div>
            <div class="ptools"><div class="pon on">${ico('cat', 18, 18)}</div>${ico('az', 17, 17)}</div>
            <div class="pgrid">
              <div class="pmain">
                <div class="pcat"><span>Aufbau</span><div class="pup"></div></div>
                <div class="prow"><div class="pl"></div><div class="pn">Bänder</div><div class="pv">(Liste)</div></div>
                <div class="pcat"><span>Aussehen</span><div class="pup"></div></div>
              </div>
              <div class="pscroll"><div class="pup"></div><div class="pdown"></div></div>
            </div>
            <div class="psplit">........</div>
            <div class="pdesc"></div>
          </div>
        </div>
      </div>
    `;
  }
}
